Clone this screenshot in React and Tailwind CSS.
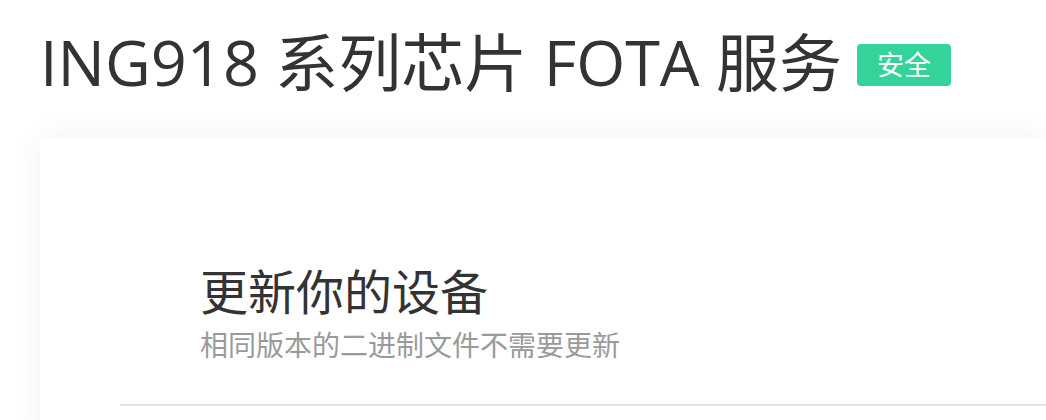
import React from 'react';

const App = () => {
    return (
        <div
            className="min-h-[420px] bg-white overflow-hidden"
            style={{ fontFamily: '"Open Sans", "Noto Sans CJK SC", sans-serif' }}
        >
            <div className="pl-[40px] pt-[14px] flex items-center">
                <h1 className="text-[63px] leading-[96px] text-[#333333] font-normal">ING918 系列芯片 FOTA 服务</h1>
                <span className="ml-[15px] mt-[6px] bg-[#34d399] text-white text-[27px] leading-[42px] px-[20px] rounded-[4px]">安全</span>
            </div>
            <div className="ml-[40px] mt-[28px] bg-white shadow-[0_0_30px_rgba(0,0,0,0.06)] min-h-[300px]">
                <div className="pt-[124px] pl-[160px]">
                    <h2 className="text-[48px] leading-[60px] text-[#333333]">更新你的设备</h2>
                    <p className="mt-[6px] text-[28px] leading-[34px] text-[#9a9a9a]">相同版本的二进制文件不需要更新</p>
                </div>
                <div className="ml-[80px] mt-[42px] border-t-2 border-[#e3e3e3]"></div>
            </div>
        </div>
    );
};

export default App;
